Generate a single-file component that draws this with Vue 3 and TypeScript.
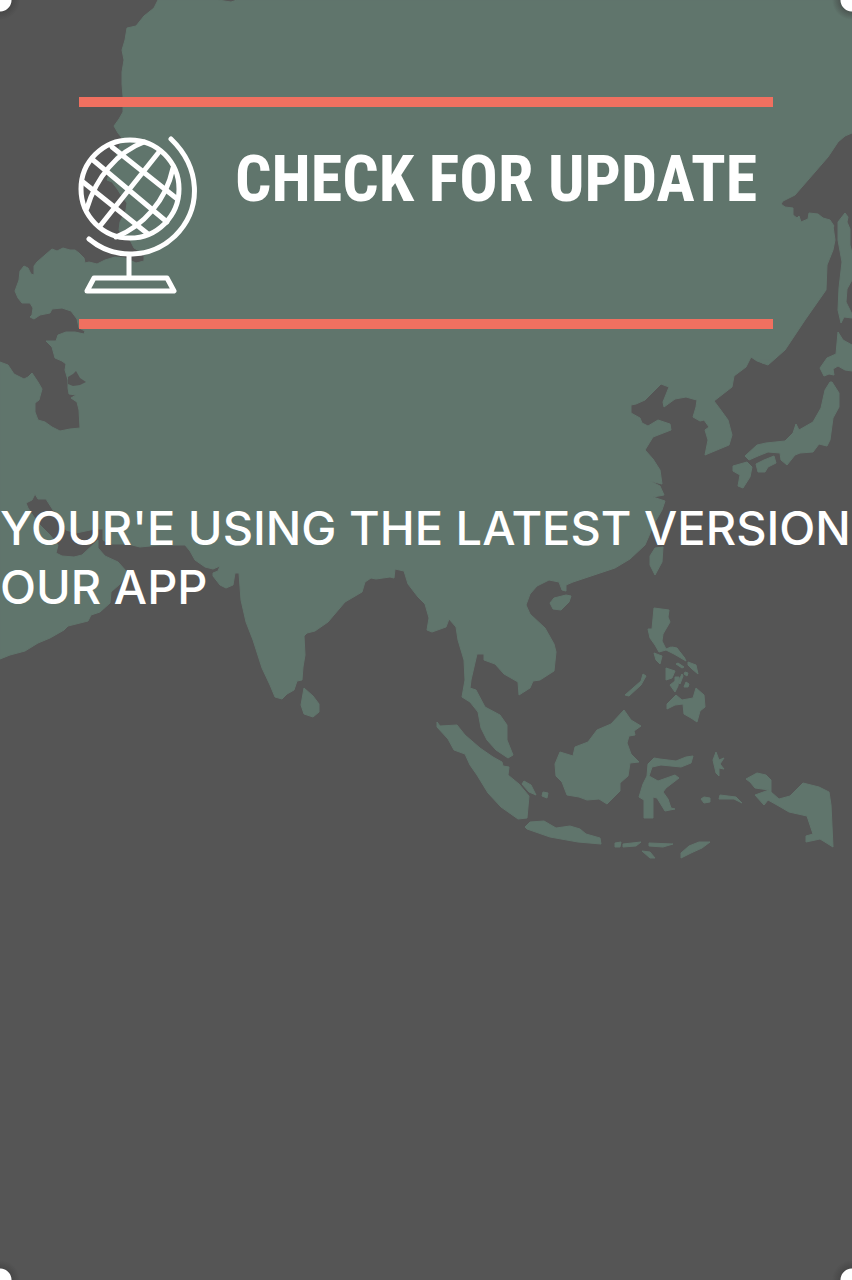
<script setup lang="ts">
const title: string = 'CHECK FOR UPDATE'
const message: string[] = ["YOUR'E USING THE LATEST VERSION", 'OUR APP']
</script>

<template>
  <main class="screen">
    <svg class="map" viewBox="0 0 852 1280" preserveAspectRatio="xMidYMin slice" aria-hidden="true">
      <g class="land">
        <!-- mainland -->
        <path d="M158 0L154 8 144 16 136 26 127 28 125 40 122 50 124 60 122 72 122 84 123 96 123 112 119 119 114 126 118 133 122 138 118 151 112 166 107 180 112 182 118 190 121 195 127 203 126 210 120 222 119 230 123 236 130 240 134 248 144 254 144 261 136 263 125 258 115 257 105 260 97 264 89 262 85 263 84 258 79 253 75 250 70 250 63 248 57 251 52 249 45 255 37 262 34 266 34 275 31 274 28 268 24 266 20 271 19 280 15 291 18 298 22 303 30 303 33 308 32 315 30 317 34 319 40 315 50 313 52 309 62 308 71 311 77 319 79 328 85 331 84 334 75 332 66 332 58 335 56 341 46 341 52 347 55 358 62 361 66 364 65 370 68 380 68 388 69 394 76 395 71 398 77 402 79 410 80 428 70 429 60 431 52 427 45 422 38 420 35 412 35 403 39 400 42 389 38 382 32 373 28 377 24 379 14 374 8 365 0 362V659L10 655 25 651 38 643 50 638 64 630 68 626 88 621 91 615 100 612 110 603 111 592 120 584 127 572 118 562 105 556 98 548 98 540 82 555 74 557 62 556 56 553 58 545 50 535 38 523 28 508 26 503 32 500 35 494 38 499 46 499 53 510 60 515 66 530 76 533 95 529 103 529 103 540 110 544 128 544 140 547 160 545 185 545 190 551 195 560 205 567 213 569 220 566 218 571 213 573 213 576 220 585 226 588 233 585 235 573 239 573 241 600 246 622 253 640 262 668 270 685 275 697 282 699 287 694 294 690 297 681 302 680 303 667 305 655 304 636 307 633 315 631 328 622 345 602 362 592 365 582 371 578 376 579 390 577 394 578 395 569 404 571 408 584 418 597 425 604 429 618 427 630 432 632 446 627 449 619 456 627 458 640 464 660 465 680 462 697 470 702 478 712 481 728 487 740 496 750 508 758 513 755 507 740 507 725 500 715 485 707 476 690 470 688 471 680 477 654 484 654 484 660 495 664 504 674 518 682 519 695 530 688 533 681 540 680 554 671 556 652 554 644 545 628 530 614 526 605 530 594 537 586 549 580 559 582 562 590 566 591 566 585 573 582 600 573 615 568 630 559 645 545 655 522 662 510 665 501 653 497 664 495 660 486 650 481 662 484 660 470 653 459 645 450 653 437 671 430 670 424 658 420 648 426 642 423 640 418 631 413 631 405 636 404 645 400 661 384 669 387 663 402 664 407 675 399 686 397 693 399 697 400 696 407 693 417 700 421 704 420 709 427 705 430 708 440 705 455 717 450 729 445 732 435 728 420 720 409 714 401 732 387 734 376 746 367 751 357 757 361 768 365 785 350 805 320 826 290 827 265 833 250 835 240 833 226 823 227 831 230 834 226 830 220 823 218 818 214 809 213 808 219 801 222 799 216 797 218 793 215 793 208 785 207 781 204 783 201 795 195 815 172 828 157 838 142 845 136 852 133V0H237L231 2 218 0Z" />
        <!-- Sakhalin and the Japanese islands -->
        <path d="M845 213L848 217 847 222 850 229 850 245 852 253V280L847 289 846 302 852 314V318L844 317 841 323 838 310 839 288 842 262 838 240 838 222Z" />
        <path d="M838 332L843 340 852 345V371L845 370 838 366 833 369 834 375 829 374 824 376 820 368 827 358 836 354Z" />
        <path d="M832 382L839 393 839 407 833 418 830 440 827 446 819 444 813 452 800 453 795 455 787 465 781 460 780 453 768 452 758 456 749 460 745 456 757 445 766 443 785 441 793 433 796 424 799 430 813 422 821 408 825 390 830 382Z" />
        <path d="M774 456L776 463 768 467 765 472 758 472 756 464 764 460Z" />
        <path d="M747 462L752 467 750 477 743 488 738 486 740 475 733 471 733 466Z" />
        <path d="M663 547L662 562 655 575 650 565 650 556 655 548Z" />
        <path d="M760 360h10l-4 3h-4Z" />
        <path d="M566 595L571 596 569 602 561 610 553 609 550 603 554 598Z" />
        <path d="M304 688L313 696 319 704 319 712 313 717 304 714 301 705Z" />
        <!-- Philippines -->
        <path d="M654 608L669 610 668 617 670 622 663 634 662 641 666 649 671 647 678 650 684 657 686 661 674 654 666 650 659 652 655 645 650 638 648 629 652 629Z" />
        <path d="M654 653l8 3-2 8-4-4Zm18-6l5 1 8 11-8-6Zm16 15l8 3 2 9-6-5-4-4Zm-22 6l9 3-3 7-6 2Zm9 9l4 0-1 9-3 6-5-7 5-4Zm8-1l-3 8-2-2 4-8Zm3 6l3 2-1 3h-4ZM678 663l6 4-2 1-6-4Zm7 9l3 1-1 3-3-2Z" />
        <path d="M696 688L704 695 705 707 700 711 697 722 691 718 684 714 683 704 675 705 667 709 667 704 676 695 682 700 693 698Z" />
        <path d="M643 674l3 2-5 9-12 11-4-1 16-14Z" />
        <!-- Indonesia -->
        <path d="M437 722L440 726 457 725 465 735 480 748 493 757 502 762 503 766 509 767 508 775 519 784 529 796 527 818 518 819 501 807 488 793 477 775 470 765 465 754 454 750 448 739 437 727Z" />
        <path d="M524 781l7 4 5 10-7-3-7-8Zm19 11l5 1-1 5-5-2Z" />
        <path d="M525 827L530 822 544 821 556 828 570 826 580 829 586 834 600 838 601 844 578 842 550 837 527 829Z" />
        <path d="M624 710L631 720 641 726 634 731 635 735 629 736 627 743 631 754 639 762 630 763 628 776 620 783 620 791 607 804 599 799 587 800 579 797 567 795 562 782 556 776 555 764 560 752 573 756 575 747 588 742 597 730 611 724Z" />
        <path d="M654 758L660 759 676 761 686 757 693 756 691 763 681 767 661 765 652 767 649 776 658 781 675 775 679 778 666 788 663 792 668 799 671 808 675 809 665 811 657 798 653 797 653 818 644 818 644 800 639 797 643 784 647 776 648 764Z" />
        <path d="M716 752l3 8 5-2-4 6 4 5-5-1 0 8-3-3-3-13Zm-12 45l6 1v4l-6 1-3-4Zm16-2l16 2 6 6-8-4-15 0Z" />
        <path d="M615 843l6-1-1 5-5 0Zm8 1l18-2-5 4-13 1Zm26-1l24 1-10 3-14-1Zm-7 8l8 1 5 6-5 0Zm68-9l-8 6-11 5-10 5v-5l8-7 10-4Z" />
        <path d="M746 779L757 773 766 775 771 780 771 792 779 799 790 796 803 783 819 787 829 792 831 805 833 847 820 839 806 842 806 836 813 834 807 816 789 812 777 805 768 800 764 805 755 795 769 790 755 788 750 782Z" />
      </g>
      <path class="sea" d="M68 377L73 374 76 371 80 378 86 382 80 385 73 386 68 384Z" />
    </svg>

    <header class="banner">
      <svg class="globe" viewBox="77 136 122 160" aria-hidden="true">
        <circle cx="130" cy="189" r="49" />
        <path d="M171 139C200 167 203 208 175 236C151 259 114 260 89 239" />
        <path d="M112 147L176 198M93 160L167 222M83 182L148 234M159 152L100 226" />
        <path d="M144 142C117 152 96 178 87 208M173 168C166 201 143 226 116 237" />
        <path d="M129 256V278M94 278H167L174 291H87Z" />
      </svg>
      <h1 class="title">{{ title }}</h1>
    </header>

    <p class="message">
      <span v-for="line in message" :key="line" class="line">{{ line }}</span>
    </p>
  </main>
</template>

<style>
html,
body {
  margin: 0;
  background: #555555;
}
</style>

<style scoped>
.screen {
  position: relative;
  box-sizing: border-box;
  min-height: 100vh;
  overflow: hidden;
  padding-top: 97px;
  background: #555555;
  color: #ffffff;
}

.screen::after {
  content: '';
  position: absolute;
  inset: 0;
  pointer-events: none;
  background:
    radial-gradient(circle at 0 0, #fff 11px, rgba(60, 60, 60, 0.5) 12px, transparent 20px),
    radial-gradient(circle at 100% 0, #fff 11px, rgba(60, 60, 60, 0.5) 12px, transparent 20px),
    radial-gradient(circle at 0 100%, #fff 11px, rgba(60, 60, 60, 0.5) 12px, transparent 20px),
    radial-gradient(circle at 100% 100%, #fff 11px, rgba(60, 60, 60, 0.5) 12px, transparent 20px);
}

.map {
  position: absolute;
  inset: 0;
  width: 100%;
  height: 100%;
}

.land {
  fill: #60756c;
  stroke: #60756c;
  stroke-width: 1;
  stroke-linejoin: round;
}

.sea {
  fill: #555555;
}

.banner {
  position: relative;
  display: flex;
  align-items: flex-start;
  gap: 36px;
  box-sizing: border-box;
  min-height: 232px;
  margin: 0 79px;
  padding-top: 29px;
  border-top: 10px solid #f07060;
  border-bottom: 10px solid #f07060;
}

.globe {
  flex: none;
  width: 122px;
  height: 160px;
  margin-left: -2px;
  fill: none;
  stroke: #ffffff;
  stroke-width: 5;
  stroke-linecap: round;
  stroke-linejoin: round;
}

.title {
  margin: 0;
  font-family: 'Roboto Condensed', 'Liberation Sans Narrow', 'Liberation Sans', sans-serif;
  font-size: 64px;
  font-weight: 700;
  line-height: 88px;
  white-space: nowrap;
}

.message {
  position: relative;
  margin: 169px 0 0;
  font-family: Inter, 'Open Sans', sans-serif;
  font-size: 47px;
  font-weight: 500;
  line-height: 59px;
}

.line {
  display: block;
  white-space: nowrap;
}
</style>
